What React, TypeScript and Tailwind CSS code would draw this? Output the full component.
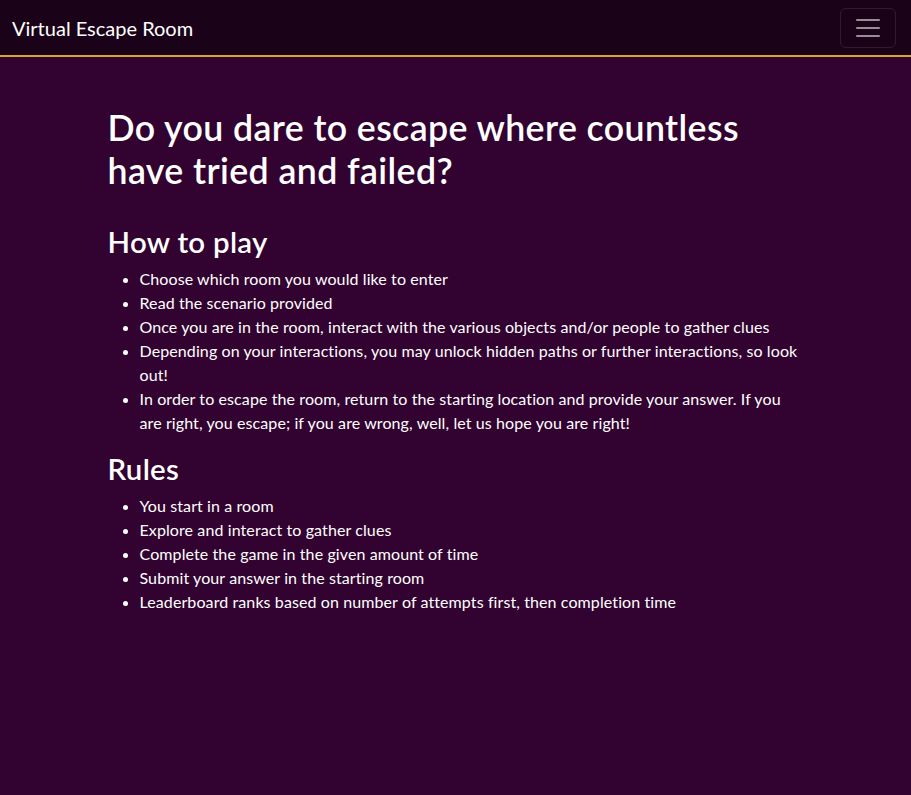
export default function App() {
  const howTo = [
    "Choose which room you would like to enter",
    "Read the scenario provided",
    "Once you are in the room, interact with the various objects and/or people to gather clues",
    "Depending on your interactions, you may unlock hidden paths or further interactions, so look out!",
    "In order to escape the room, return to the starting location and provide your answer. If you are right, you escape; if you are wrong, well, let us hope you are right!",
  ]

  const rules = [
    "You start in a room",
    "Explore and interact to gather clues",
    "Complete the game in the given amount of time",
    "Submit your answer in the starting room",
    "Leaderboard ranks based on number of attempts first, then completion time",
  ]

  return (
    <div className="min-h-[795px] bg-[#320330] text-white font-['Lato','Open_Sans',sans-serif]">
      {/* Navbar */}
      <nav className="h-[57px] bg-[#1a0318] border-b-2 border-[#d4a72c] flex items-center justify-between pl-3 pr-[15px]">
        <a href="#" className="text-[20px] leading-[30px] text-white">
          Virtual Escape Room
        </a>
        <button
          className="w-14 h-10 rounded-md border border-white/10 flex items-center justify-center"
          aria-label="Toggle navigation"
        >
          <svg width="30" height="30" viewBox="0 0 30 30">
            <path
              d="M4 7h22M4 15h22M4 23h22"
              stroke="rgba(255,255,255,0.55)"
              strokeWidth="2"
              strokeLinecap="round"
            />
          </svg>
        </button>
      </nav>

      <main className="w-[720px] mx-auto px-3 pt-[50px]">
        <h1 className="text-[35.7px] leading-[1.2] font-semibold tracking-[0.4px] mb-[31px]">
          Do you dare to escape where countless have tried and failed?
        </h1>

        <h2 className="text-[29.4px] leading-[1.2] font-semibold tracking-[0.3px] mb-2">How to play</h2>
        <ul className="list-disc pl-8 mb-4 text-base leading-6 tracking-[0.1px]">
          {howTo.map((item) => (
            <li key={item}>{item}</li>
          ))}
        </ul>

        <h2 className="text-[29.4px] leading-[1.2] font-semibold tracking-[0.3px] mb-2">Rules</h2>
        <ul className="list-disc pl-8 mb-4 text-base leading-6 tracking-[0.1px]">
          {rules.map((item) => (
            <li key={item}>{item}</li>
          ))}
        </ul>
      </main>
    </div>
  )
}
